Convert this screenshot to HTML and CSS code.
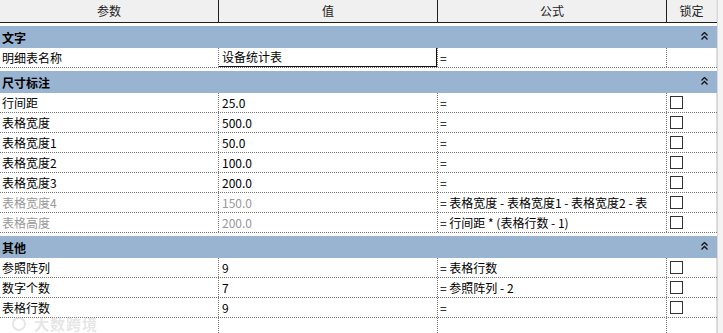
FILE: index.html
```html
<!DOCTYPE html>
<html lang="zh">
<head>
    <meta charset="UTF-8">
    <title>类型属性</title>
    <link rel="stylesheet" href="styles.css">
</head>
<body>

    <div class="page">
        <div class="grid">
            <div class="head">
                <div class="hcell">参数</div>
                <div class="hcell">值</div>
                <div class="hcell">公式</div>
                <div class="hcell last">锁定</div>
            </div>

            <div class="group">
                <div class="group-bar"><span>文字</span><svg class="fold" width="7" height="8" viewBox="0 0 7 8"><polyline points="0.5,3.5 3.5,0.5 6.5,3.5" /><polyline points="0.5,7.5 3.5,4.5 6.5,7.5" /></svg></div>
            </div>
            <div class="row">
                <div class="cell">明细表名称</div>
                <div class="cell val"><span class="edit">设备统计表</span></div>
                <div class="cell">=</div>
                <div class="cell lock"></div>
            </div>

            <div class="group">
                <div class="group-bar"><span>尺寸标注</span><svg class="fold" width="7" height="8" viewBox="0 0 7 8"><polyline points="0.5,3.5 3.5,0.5 6.5,3.5" /><polyline points="0.5,7.5 3.5,4.5 6.5,7.5" /></svg></div>
            </div>
            <div class="row">
                <div class="cell">行间距</div>
                <div class="cell val">25.0</div>
                <div class="cell">=</div>
                <div class="cell lock"><span class="box"></span></div>
            </div>
            <div class="row">
                <div class="cell">表格宽度</div>
                <div class="cell val">500.0</div>
                <div class="cell">=</div>
                <div class="cell lock"><span class="box"></span></div>
            </div>
            <div class="row">
                <div class="cell">表格宽度1</div>
                <div class="cell val">50.0</div>
                <div class="cell">=</div>
                <div class="cell lock"><span class="box"></span></div>
            </div>
            <div class="row">
                <div class="cell">表格宽度2</div>
                <div class="cell val">100.0</div>
                <div class="cell">=</div>
                <div class="cell lock"><span class="box"></span></div>
            </div>
            <div class="row">
                <div class="cell">表格宽度3</div>
                <div class="cell val">200.0</div>
                <div class="cell">=</div>
                <div class="cell lock"><span class="box"></span></div>
            </div>
            <div class="row">
                <div class="cell dim">表格宽度4</div>
                <div class="cell val dim">150.0</div>
                <div class="cell">= 表格宽度 - 表格宽度1 - 表格宽度2 - 表</div>
                <div class="cell lock"><span class="box"></span></div>
            </div>
            <div class="row">
                <div class="cell dim">表格高度</div>
                <div class="cell val dim">200.0</div>
                <div class="cell">= 行间距 * (表格行数 - 1)</div>
                <div class="cell lock"><span class="box"></span></div>
            </div>

            <div class="group">
                <div class="group-bar"><span>其他</span><svg class="fold" width="7" height="8" viewBox="0 0 7 8"><polyline points="0.5,3.5 3.5,0.5 6.5,3.5" /><polyline points="0.5,7.5 3.5,4.5 6.5,7.5" /></svg></div>
            </div>
            <div class="row">
                <div class="cell">参照阵列</div>
                <div class="cell val">9</div>
                <div class="cell">= 表格行数</div>
                <div class="cell lock"><span class="box"></span></div>
            </div>
            <div class="row">
                <div class="cell">数字个数</div>
                <div class="cell val">7</div>
                <div class="cell">= 参照阵列 - 2</div>
                <div class="cell lock"><span class="box"></span></div>
            </div>
            <div class="row">
                <div class="cell">表格行数</div>
                <div class="cell val">9</div>
                <div class="cell">=</div>
                <div class="cell lock"><span class="box"></span></div>
            </div>
            <div class="row">
                <div class="cell"></div>
                <div class="cell val"></div>
                <div class="cell"></div>
                <div class="cell lock"></div>
            </div>
        </div>
        <div class="side"></div>
    </div>

    <div class="mark"><span class="mark-logo"></span>大数跨境</div>

</body>
</html>
```

FILE: styles.css
```css
* {
    margin: 0;
    padding: 0;
    box-sizing: border-box;
}
body {
    width: 723px;
    height: 333px;
    overflow: hidden;
    background: white;
    font-family: "Noto Sans CJK SC", "Microsoft YaHei", sans-serif;
    font-size: 12px;
    color: #000;
}
.page {
    display: flex;
    height: 333px;
}
.grid {
    width: 717px;
    flex: none;
}
.side {
    flex: 1;
    background: #f4f4f4;
    border-left: 1px solid #d8d8d8;
}
.head,
.row {
    display: grid;
    grid-template-columns: 219px 219px 229px 50px;
}
.head {
    height: 23px;
    background: #f0f0f0;
    border-bottom: 1px solid #1e1e1e;
}
.hcell {
    display: flex;
    align-items: center;
    justify-content: center;
    border-right: 1px solid #1e1e1e;
    line-height: 22px;
    color: #222;
}
.hcell.last {
    border-right: 1px solid #e6e6e6;
}
.group {
    height: 25px;
    padding-top: 3px;
}
.group-bar {
    height: 22px;
    background: #99b4d1;
    display: flex;
    align-items: center;
    justify-content: space-between;
    padding: 0 9px 0 2px;
    font-weight: bold;
}
.fold {
    fill: none;
    stroke: #111;
    stroke-width: 1.3;
    margin-bottom: 3px;
}
.row {
    height: 20px;
    border-bottom: 1px dotted #777;
}
.cell {
    border-right: 1px dotted #777;
    padding-left: 2px;
    line-height: 19px;
    white-space: nowrap;
    overflow: hidden;
}
.cell.val {
    padding-left: 3px;
}
.cell.dim {
    color: #999;
}
.edit {
    display: block;
    margin: -1px 0 -1px -4px;
    height: 20px;
    border: 1px solid #111;
    padding-left: 3px;
    line-height: 18px;
    background: white;
}
.cell.lock {
    border-right: 1px solid #dcdcdc;
    padding: 3px 0 0 3px;
}
.box {
    display: block;
    width: 13px;
    height: 13px;
    border: 1px solid #333;
    background: white;
}
.mark {
    position: absolute;
    left: 12px;
    top: 313px;
    display: flex;
    align-items: center;
    gap: 8px;
    font-size: 15px;
    font-weight: bold;
    color: rgba(200, 200, 200, 0.45);
    letter-spacing: 1px;
}
.mark-logo {
    width: 14px;
    height: 14px;
    border: 2px solid rgba(200, 200, 200, 0.45);
    border-radius: 50%;
}
```
